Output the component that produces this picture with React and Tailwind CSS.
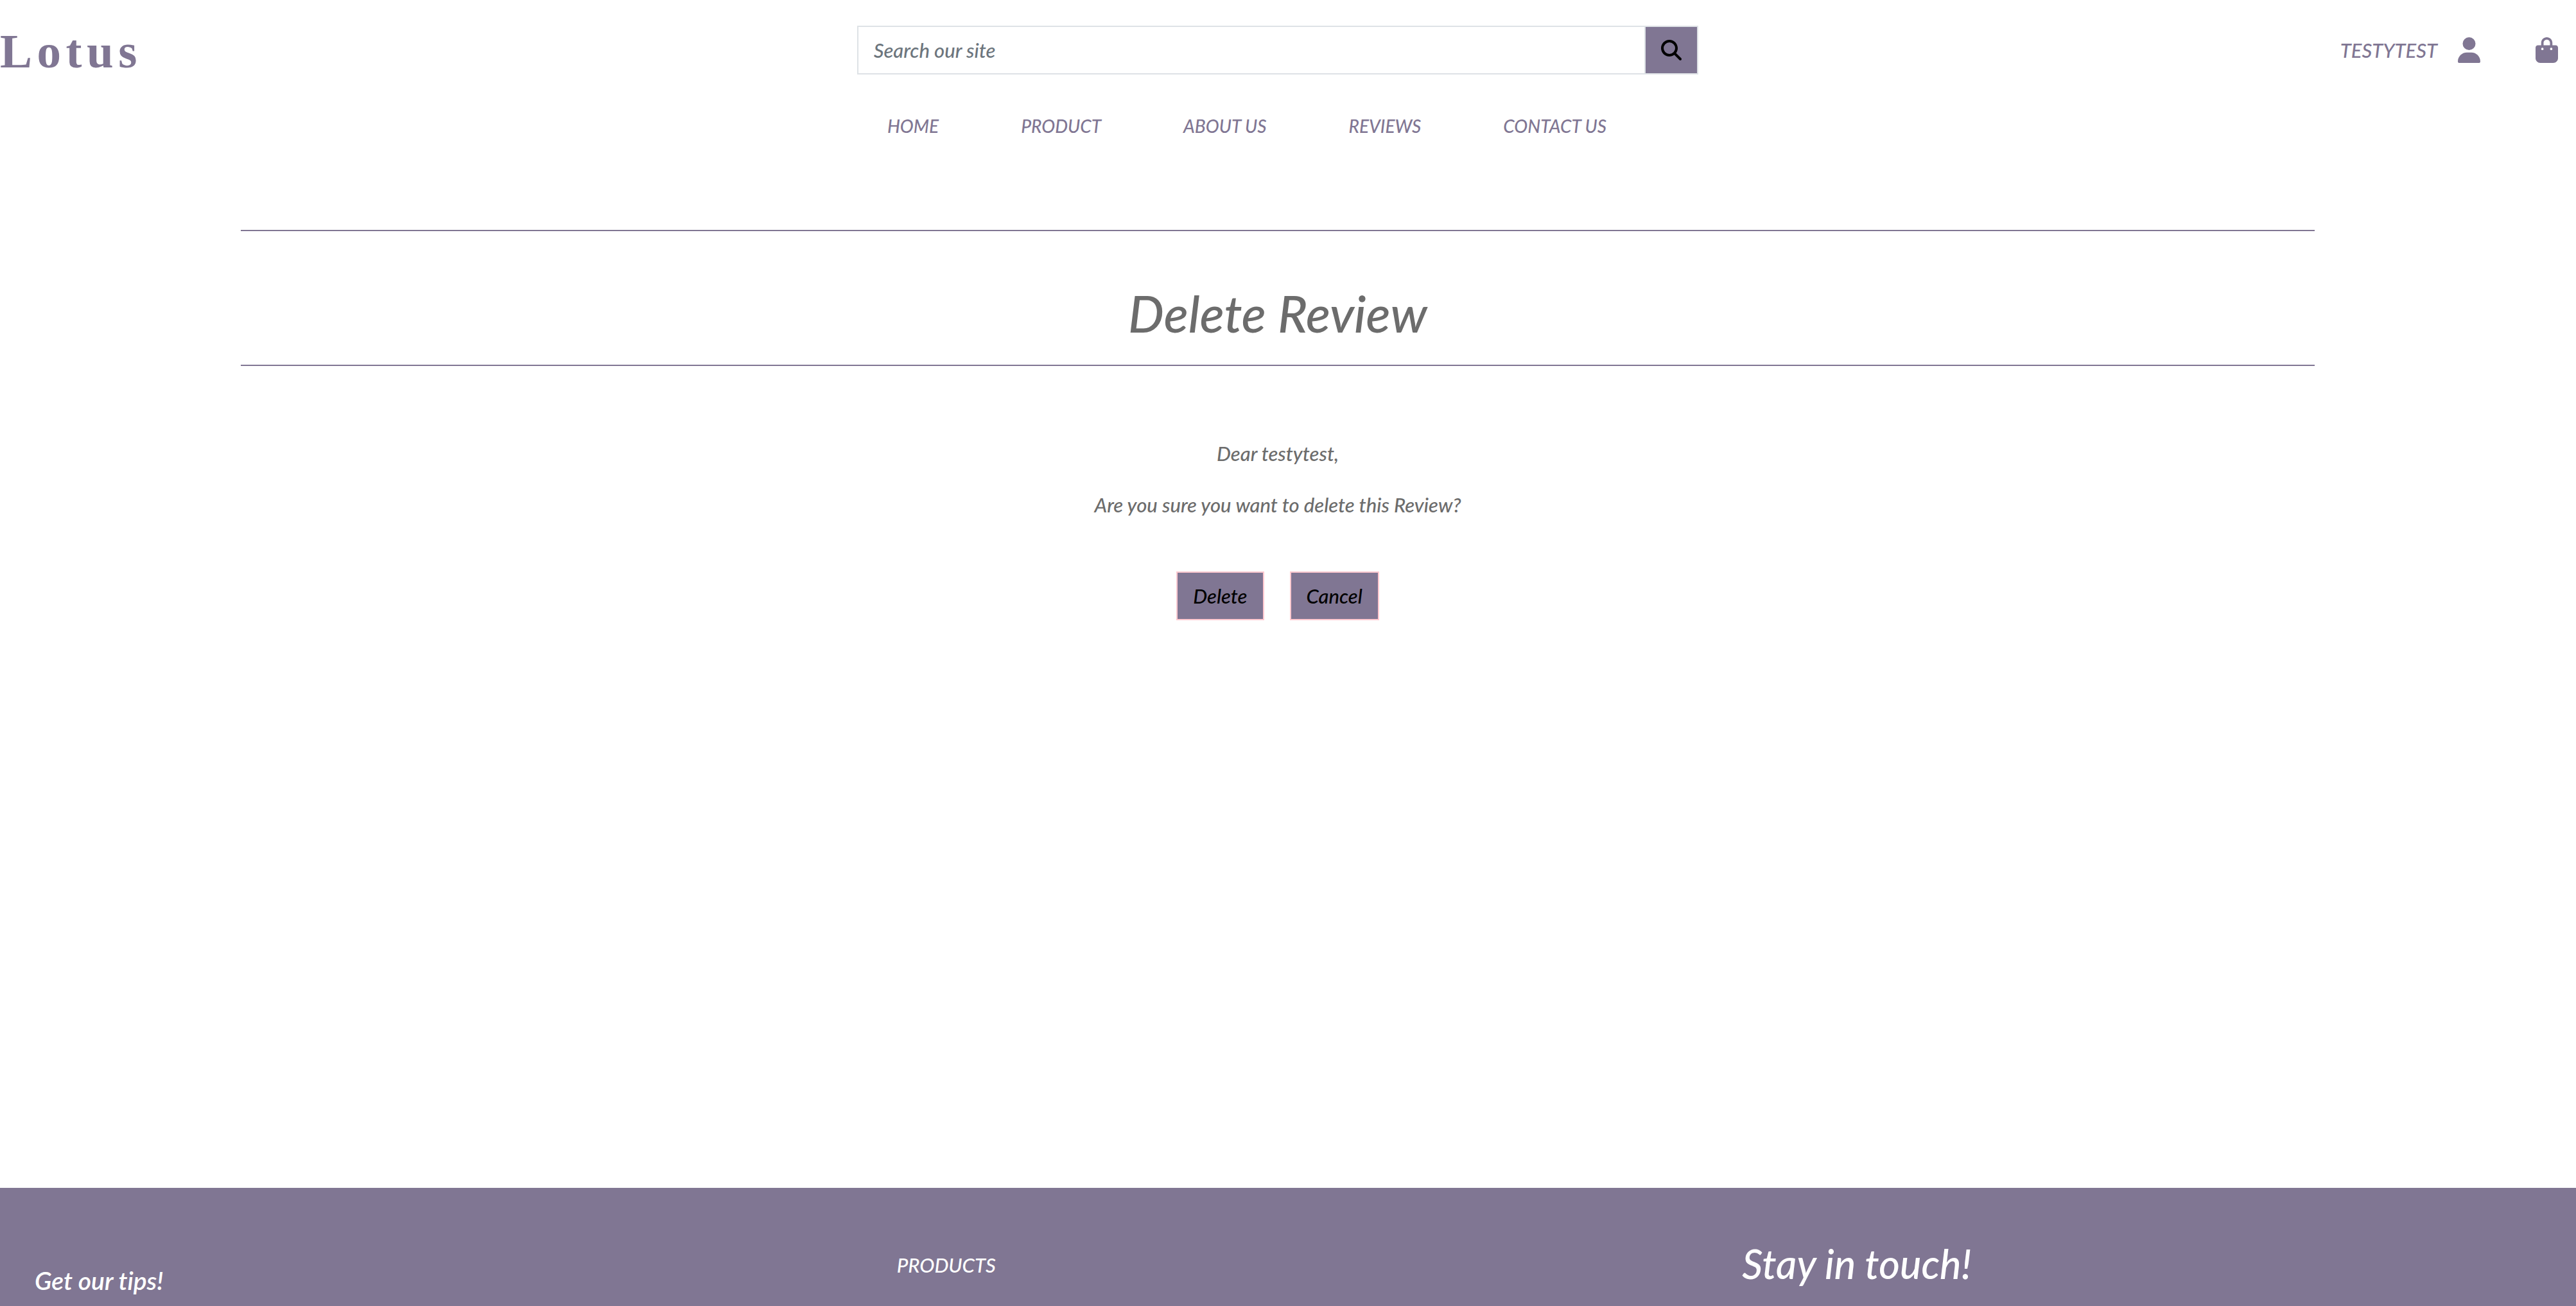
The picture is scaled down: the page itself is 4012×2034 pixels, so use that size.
import { FaBagShopping, FaMagnifyingGlass, FaUser } from "react-icons/fa6";

const navLinks = ["HOME", "PRODUCT", "ABOUT US", "REVIEWS", "CONTACT US"];

function Header() {
  return (
    <header>
      <div className="grid grid-cols-3 items-center pt-10 pr-8">
        <a
          href="#home"
          className="pt-1 font-['Liberation_Serif',serif] text-[75px] leading-[72px] font-bold tracking-widest not-italic"
        >
          Lotus
        </a>
        <form className="mx-2 flex h-[76px]" onSubmit={(e) => e.preventDefault()}>
          <input
            type="text"
            aria-label="Search our site"
            placeholder="Search our site"
            className="min-w-0 flex-1 border-2 border-[#dee2e6] px-6 text-[31px] font-medium text-[#212529] italic placeholder:text-[#6c757d] placeholder:opacity-100"
          />
          <button
            type="submit"
            aria-label="Search"
            className="-ml-0.5 flex items-center border-2 border-[#dee2e6] bg-[#807693] px-6 text-black"
          >
            <FaMagnifyingGlass className="size-8" />
          </button>
        </form>
        <div className="-mr-1 flex items-center justify-end">
          <a href="#account" className="flex items-center gap-8 text-[31px] leading-[48px]">
            TESTYTEST
            <FaUser className="h-10 w-[35px]" />
          </a>
          <a href="#bag" aria-label="Shopping bag" className="ml-[86px]">
            <FaBagShopping className="h-10 w-[35px]" />
          </a>
        </div>
      </div>
      <nav className="mt-14 flex justify-center gap-32 pr-[128px] text-[28px] leading-[48px]">
        {navLinks.map((label) => (
          <a key={label} href="#nav">
            {label}
          </a>
        ))}
      </nav>
    </header>
  );
}

function ReviewButton({ children }) {
  return (
    <button
      type="button"
      className="border-2 border-[#ffc9d0] bg-[#807693] px-6 py-3 text-[31px] leading-[48px] font-medium text-black italic"
    >
      {children}
    </button>
  );
}

export default function App() {
  return (
    <div className="flex min-h-screen flex-col overflow-x-hidden bg-white font-[Lato,sans-serif] font-medium text-[#807693] italic [font-variant-ligatures:none]">
      <Header />
      <main className="flex flex-1 flex-col pt-[138px] pr-8 text-center text-[31px] leading-[48px] text-[#6c6c6c]">
        <div className="px-[375px]">
          <h1 className="border-y-2 border-[#807693] pt-20 pb-8 text-[79px] leading-[96px] font-medium">
            Delete Review
          </h1>
          <p className="mt-28">Dear testytest,</p>
          <p className="mt-8">Are you sure you want to delete this Review?</p>
          <div className="mt-20 flex justify-center gap-10">
            <ReviewButton>Delete</ReviewButton>
            <ReviewButton>Cancel</ReviewButton>
          </div>
        </div>
      </main>
      <footer className="grid h-[184px] grid-cols-3 bg-[#807693] pr-8 text-white">
        <h2 className="pt-[120px] pl-[54px] text-[39px] leading-[48px] font-semibold">Get our tips!</h2>
        <h3 className="pt-24 pl-[70px] text-[31px] leading-[48px] font-medium">PRODUCTS</h3>
        <h2 className="pt-20 pl-[60px] text-[63px] leading-[76px] font-medium">Stay in touch!</h2>
      </footer>
    </div>
  );
}
